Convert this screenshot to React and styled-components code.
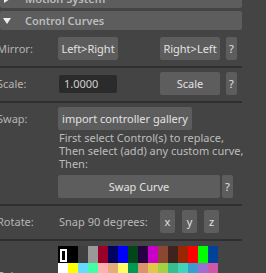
import React from 'react';
import styled, { createGlobalStyle } from 'styled-components';

const GlobalStyle = createGlobalStyle`
  html, body {
    margin: 0;
    padding: 0;
    background: #444444;
  }
  body {
    font-family: "Noto Sans", "Liberation Sans", sans-serif;
    font-size: 11px;
    color: #bdbdbd;
    overflow: hidden;
  }
`

const topColors = [
  '#000000', '#000000', '#404040', '#999999', '#9b0028', '#000460', '#0000ff', '#004619',
  '#260043', '#c800c8', '#8a4833', '#3f231f', '#992600', '#ff0000', '#00ff00', '#004199',
]

const bottomColors = [
  '#ffffff', '#ffff00', '#64dcff', '#43ffa3', '#ffb0b0', '#e4ac79', '#ffff63', '#009954',
  '#dc926d', '#e1c84c', '#a2d046', '#38bd8d', '#3fd4bc', '#3b9dcf', '#9e6ed0', '#cd58a6',
]

function App() {
  return (
    <Page>
      <GlobalStyle />
      <Panel>
        <FrameHeader>
          <Arrow $open={false} />
          <HeaderLabel>Motion System</HeaderLabel>
        </FrameHeader>
        <FrameHeader>
          <Arrow $open />
          <HeaderLabel>Control Curves</HeaderLabel>
        </FrameHeader>

        <Section>
          <Row>
            <Label>Mirror:</Label>
            <Button $w={60}>Left&gt;Right</Button>
            <Spacer $w={42} />
            <Button $w={60}>Right&gt;Left</Button>
            <Spacer $w={6} />
            <Button $w={11}>?</Button>
          </Row>
        </Section>
        <Separator />

        <Section>
          <Row>
            <Label>Scale:</Label>
            <Field>1.0000</Field>
            <Spacer $w={43} />
            <Button $w={60}>Scale</Button>
            <Spacer $w={6} />
            <Button $w={11}>?</Button>
          </Row>
        </Section>
        <Separator />

        <Section>
          <Row>
            <Label>Swap:</Label>
            <Button $w={134}>import controller gallery</Button>
          </Row>
          <Note>
            First select Control(s) to replace,<br />
            Then select (add) any custom curve,<br />
            Then:
          </Note>
          <Row>
            <Label />
            <Button $w={162}>Swap Curve</Button>
            <Spacer $w={2} />
            <Button $w={11}>?</Button>
          </Row>
        </Section>
        <Separator />

        <Section>
          <Row>
            <Label>Rotate:</Label>
            <Text>Snap 90 degrees:</Text>
            <AxisGroup>
              <Button $w={15}>x</Button>
              <Button $w={15}>y</Button>
              <Button $w={15}>z</Button>
            </AxisGroup>
          </Row>
        </Section>
        <Separator />

        <ColorSection>
          <Label $top>Color:</Label>
          <Palette>
            {topColors.map((c, i) => (
              <Swatch key={'t' + i} style={{ background: c }}>
                {i === 0 ? <Selected /> : null}
              </Swatch>
            ))}
            {bottomColors.map((c, i) => (
              <Swatch key={'b' + i} style={{ background: c }} />
            ))}
          </Palette>
        </ColorSection>
      </Panel>
    </Page>
  )
}

export default App

const Page = styled.div`
  width: 266px;
  height: 273px;
  overflow: hidden;
  background: #444444;
`

const Panel = styled.div`
  width: 242px;
  margin-top: -11px;
`

const FrameHeader = styled.div`
  height: 19px;
  margin-bottom: 3px;
  background: #5d5d5d;
  border-radius: 2px;
  display: flex;
  align-items: center;

  &:last-of-type {
    margin-bottom: 0;
  }
`

const Arrow = styled.div`
  width: 0;
  height: 0;
  margin-left: 3px;
  margin-right: 14px;
  border-left: 4px solid transparent;
  border-right: 4px solid transparent;
  border-top: 6px solid #eeeeee;
  transform: ${p => (p.$open ? 'none' : 'rotate(-90deg)')};
`

const HeaderLabel = styled.div`
  font-weight: 600;
  font-size: 11px;
  color: #bcbcbc;
  line-height: 19px;
`

const Section = styled.div`
  padding: 4px 0 6px 0;
  display: flex;
  flex-direction: column;
`

const Row = styled.div`
  display: flex;
  align-items: center;
  height: 23px;
`

const Label = styled.div`
  width: 61px;
  margin-left: -3px;
  flex-shrink: 0;
  color: #b4b4b4;
  align-self: ${p => (p.$top ? 'flex-start' : 'auto')};
  padding-top: ${p => (p.$top ? '22px' : '0')};
`

const Spacer = styled.div`
  width: ${p => p.$w}px;
  flex-shrink: 0;
`

const Button = styled.div`
  width: ${p => p.$w}px;
  height: 23px;
  flex-shrink: 0;
  background: #5d5d5d;
  border-radius: 2px;
  color: #e2e2e2;
  display: flex;
  align-items: center;
  justify-content: center;
  white-space: nowrap;
  overflow: hidden;
`

const Field = styled.div`
  width: 58px;
  height: 18px;
  margin-left: 1px;
  box-sizing: border-box;
  padding-left: 5px;
  background: #2b2b2b;
  border-radius: 2px;
  color: #d0d0d0;
  line-height: 18px;
`

const Note = styled.div`
  margin: 1px 0 5px 59px;
  line-height: 13px;
  white-space: nowrap;
  color: #bdbdbd;
`

const Text = styled.div`
  width: 101px;
  padding-left: 1px;
  flex-shrink: 0;
  color: #b8b8b8;
`

const AxisGroup = styled.div`
  display: flex;
  gap: 7px;
`

const Separator = styled.div`
  height: 2px;
  background: #2f2f2f;
`

const ColorSection = styled.div`
  display: flex;
  padding-top: 5px;
`

const Palette = styled.div`
  display: grid;
  grid-template-columns: repeat(16, 10px);
  grid-auto-rows: 17px;
`

const Swatch = styled.div`
  position: relative;
`

const Selected = styled.div`
  position: absolute;
  left: 2px;
  top: 3px;
  width: 7px;
  height: 13px;
  box-sizing: border-box;
  border: 2px solid #ffffff;
`
